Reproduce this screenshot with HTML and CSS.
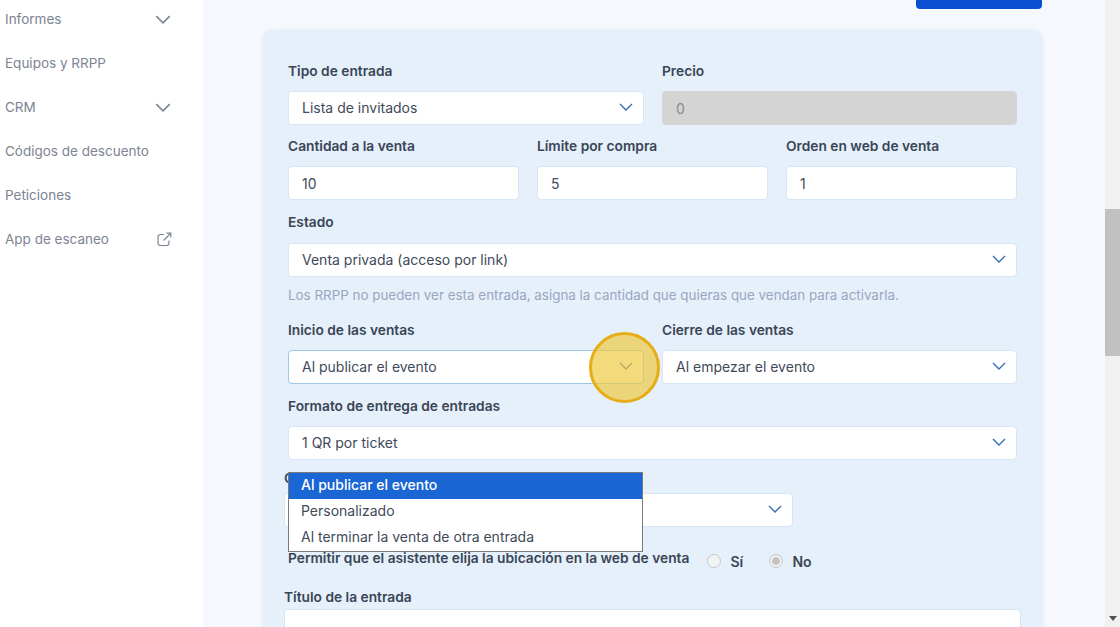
FILE: index.html
```html
<!DOCTYPE html>
<html lang="es">
<head>
<meta charset="utf-8">
<title>Entrada</title>
<link rel="stylesheet" href="styles.css">
</head>
<body>
<svg class="defs" width="0" height="0"><defs>
<symbol id="chev" viewBox="0 0 14 8"><path d="M1 1l6 6 6-6" fill="none" stroke="currentColor" stroke-width="1.4"/></symbol>
</defs></svg>
<div class="app">
  <nav class="sidebar">
    <div class="nav-item"><span>Informes</span><svg class="nav-chev"><use href="#chev"/></svg></div>
    <div class="nav-item"><span>Equipos y RRPP</span></div>
    <div class="nav-item"><span>CRM</span><svg class="nav-chev"><use href="#chev"/></svg></div>
    <div class="nav-item"><span>Códigos de descuento</span></div>
    <div class="nav-item"><span>Peticiones</span></div>
    <div class="nav-item"><span>App de escaneo</span>
      <svg class="nav-ext" viewBox="0 0 15 15" fill="none" stroke="currentColor" stroke-width="1.200"><path d="M7 2.500H3.500a2.500 2.500 0 0 0-2.500 2.500v6a2.500 2.500 0 0 0 2.500 2.500h6a2.500 2.500 0 0 0 2.500-2.500V8.500"/><path d="M6.500 8.500L13.500 1.500M9.500 1.200h4.300v4.300"/></svg>
    </div>
  </nav>
  <main class="main">
    <div class="top-actions"><div class="save-btn"></div></div>
    <section class="card">
      <div class="row cols-2">
        <div class="field"><div class="label">Tipo de entrada</div><div class="control select">Lista de invitados<svg class="chev"><use href="#chev"/></svg></div></div>
        <div class="field"><div class="label">Precio</div><div class="control disabled">0</div></div>
      </div>
      <div class="row cols-3 gap-12">
        <div class="field"><div class="label">Cantidad a la venta</div><div class="control">10</div></div>
        <div class="field"><div class="label">Límite por compra</div><div class="control">5</div></div>
        <div class="field"><div class="label">Orden en web de venta</div><div class="control">1</div></div>
      </div>
      <div class="row gap-8">
        <div class="field"><div class="label label-11">Estado</div><div class="control select">Venta privada (acceso por link)<svg class="chev"><use href="#chev"/></svg></div></div>
      </div>
      <p class="help">Los RRPP no pueden ver esta entrada, asigna la cantidad que quieras que vendan para activarla.</p>
      <div class="row cols-2 gap-12">
        <div class="field"><div class="label">Inicio de las ventas</div>
          <div class="control select focused">Al publicar el evento<svg class="chev"><use href="#chev"/></svg><div class="spot"></div></div>
          <ul class="popup">
            <li class="selected">Al publicar el evento</li>
            <li>Personalizado</li>
            <li>Al terminar la venta de otra entrada</li>
          </ul>
        </div>
        <div class="field"><div class="label">Cierre de las ventas</div><div class="control select">Al empezar el evento<svg class="chev"><use href="#chev"/></svg></div></div>
      </div>
      <div class="row gap-8">
        <div class="field"><div class="label">Formato de entrega de entradas</div><div class="control select">1 QR por ticket<svg class="chev"><use href="#chev"/></svg></div></div>
      </div>
      <div class="row wide-partial">
        <div class="field"><div class="label label-tight">Categoría</div><div class="control select"><svg class="chev"><use href="#chev"/></svg></div></div>
      </div>
      <div class="radio-row">
        <div class="label radio-q">Permitir que el asistente elija la ubicación en la web de venta</div>
        <div class="radio-opt"><span class="radio"></span><span>Sí</span></div>
        <div class="radio-opt"><span class="radio checked"></span><span>No</span></div>
      </div>
      <div class="row wide-full">
        <div class="field"><div class="label label-title">Título de la entrada</div><div class="control"></div></div>
      </div>
    </section>
  </main>
  <div class="scrollbar">
    <div class="thumb"></div>
    <div class="arrow"></div>
  </div>
</div>
</body>
</html>
```
FILE: styles.css
```css
* { box-sizing: border-box; }
html, body { margin: 0; height: 100%; overflow: hidden; }
body { font-family: "Inter", "Liberation Sans", sans-serif; color: #3a4556; }
.defs { position: absolute; }
.app { display: flex; height: 627px; overflow: hidden; }

.sidebar { width: 203px; flex: none; background: #fff; padding: 0 32px 0 5px; color: #7d8494; font-size: 13.500px; }
.nav-item { height: 44px; display: flex; align-items: center; justify-content: space-between; }
.nav-item:first-child { margin-top: -3px; }
.nav-chev { width: 16px; height: 9px; color: #7d8494; }
.nav-ext { width: 15px; height: 15px; margin-right: -1px; }

.main { flex: 1; min-width: 0; background: #f5f9fd; padding: 0 63px 0 61px; overflow: hidden; }
.top-actions { display: flex; justify-content: flex-end; height: 31px; }
.save-btn { width: 126px; height: 9px; background: #0a4fd0; border-radius: 0 0 4px 4px; }

.card { height: 640px; background: #e5f0fb; border-radius: 8px; padding: 30px 25px 0 24px; box-shadow: 0 0 4px rgba(120,150,190,.22); }
.row { display: grid; gap: 18px; margin-bottom: 11px; }
.cols-2 { grid-template-columns: 356px 355px; }
.cols-3 { grid-template-columns: repeat(3, 231px); }
.gap-12 { margin-bottom: 12px; }
.gap-8 { margin-bottom: 8px; }
.field { position: relative; min-width: 0; }
.label { font-size: 13.750px; font-weight: 600; line-height: 20px; margin-bottom: 10px; color: #3a4556; }
.label-11 { margin-bottom: 11px; }
.label-tight { margin-bottom: 5px; }
.label-title { margin-bottom: 2px; }
.control { position: relative; height: 34px; background: #fff; border: 1px solid #d8e5f5; border-radius: 4px; padding: 0 13px; display: flex; align-items: center; justify-content: space-between; font-size: 14px; color: #3f4a5a; }
.control.select { padding-bottom: 2px; }
.control.disabled { background: #d4d4d4; border-color: #d4d4d4; color: #8a8a8a; }
.control.focused { border-color: #9cc7e6; }
.chev { width: 14px; height: 8px; color: #3a6cb4; margin-right: -3px; margin-left: auto; }

.help { margin: 0 0 15px; height: 20px; line-height: 20px; font-size: 13.400px; color: #9aa6bd; }

.spot { position: absolute; left: 300px; top: -19px; width: 71px; height: 71px; border-radius: 50%; background: rgba(238, 200, 60, .68); border: 3px solid #e6ad17; }

.popup { position: absolute; z-index: 2; left: 0; top: 152px; width: 355px; height: 80px; margin: 0; padding: 0; list-style: none; background: #fff; border: 1px solid #7a7a7a; font-size: 14px; color: #3f4a5a; }
.popup li { height: 26px; line-height: 24px; padding-left: 12px; }
.popup .selected { background: #1a66d4; color: #fff; font-weight: 500; }

.wide-partial { margin-left: -4px; width: 509px; margin-bottom: 16px; }
.wide-full { margin-left: -4px; width: 737px; }

.radio-row { display: flex; align-items: center; height: 36px; margin-bottom: 8px; }
.radio-q { margin: 0 18px 6px 0; white-space: nowrap; }
.radio-opt { display: flex; align-items: center; gap: 9px; width: 62px; font-size: 14px; font-weight: 600; }
.radio { width: 14px; height: 14px; border-radius: 50%; border: 1px solid #c4c8cc; background: #f1f3f5; display: block; }
.radio.checked { background: radial-gradient(circle, #c2c2c2 0 3.500px, #f0f0f0 4px); }

.scrollbar { width: 15px; flex: none; background: #f1f1f1; padding-top: 209px; display: flex; flex-direction: column; align-items: center; }
.thumb { width: 100%; height: 147px; background: #c1c1c1; }
.arrow { margin-top: auto; margin-bottom: 6px; width: 0; height: 0; border-left: 4px solid transparent; border-right: 4px solid transparent; border-top: 5px solid #505050; }
```
